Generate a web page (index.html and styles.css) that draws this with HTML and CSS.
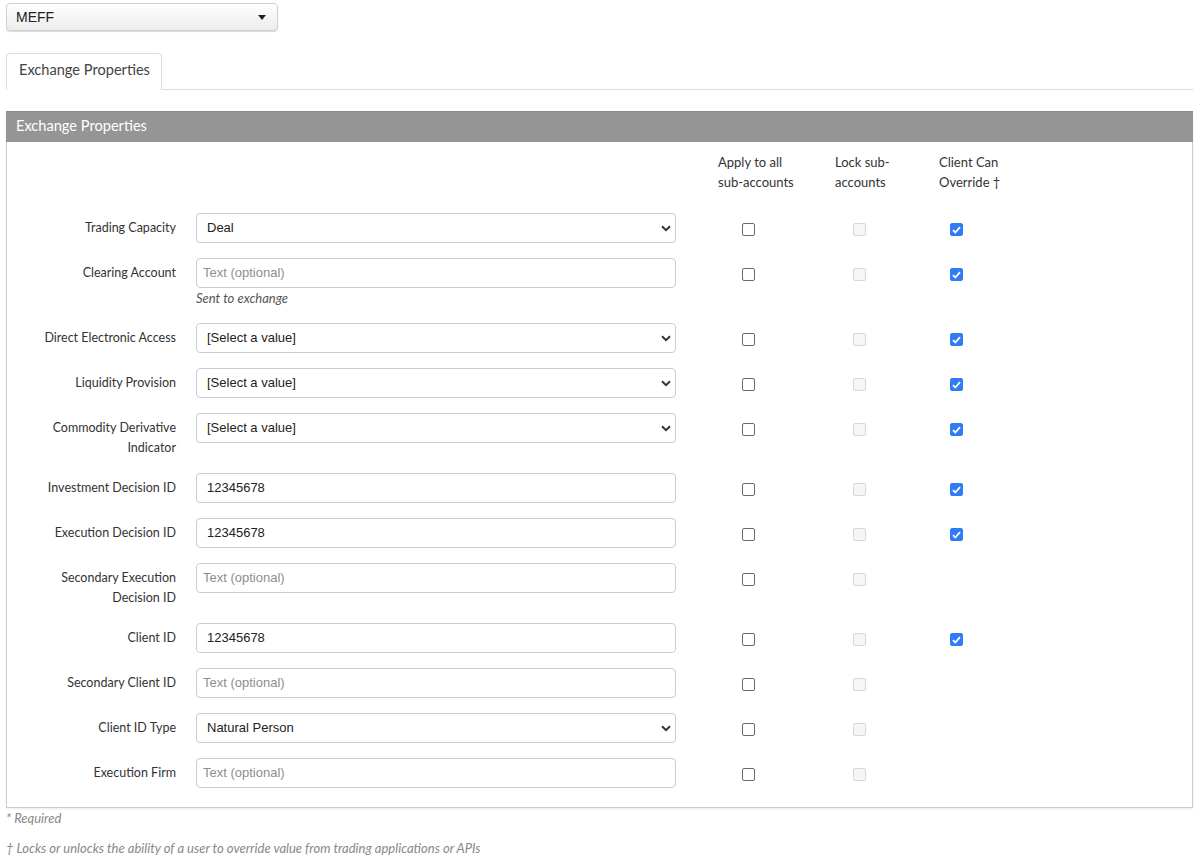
FILE: index.html
```html
<!DOCTYPE html>
<html lang="en">
  <head>
    <meta charset="UTF-8" />
    <title>Exchange Properties</title>
    <link rel="stylesheet" href="styles.css">
  </head>
  <body>
    <div class="exchange-select">
      <span>MEFF</span>
      <svg width="8" height="5" viewBox="0 0 8 5"><path d="M0 0h8L4 5z" fill="#222"/></svg>
    </div>

    <div class="tabs">
      <div class="tab">Exchange Properties</div>
    </div>

    <div class="panel">
      <div class="panel-heading">Exchange Properties</div>
      <div class="panel-body">
        <div class="form-row head-row">
          <div class="row-label"></div>
          <div class="row-field"></div>
          <div class="col col-apply">Apply to all<br>sub-accounts</div>
          <div class="col col-lock">Lock sub-<br>accounts</div>
          <div class="col col-override">Client Can<br>Override †</div>
        </div>

        <div class="form-row">
          <div class="row-label">Trading Capacity</div>
          <div class="row-field"><div class="select"><span>Deal</span><svg class="chev" width="10" height="7" viewBox="0 0 10 7"><path d="M1 1.2l4 4 4-4" fill="none" stroke="#333" stroke-width="2"/></svg></div></div>
          <div class="col col-apply"><span class="cb"></span></div>
          <div class="col col-lock"><span class="cb disabled"></span></div>
          <div class="col col-override"><span class="cb checked"><svg width="9" height="8" viewBox="0 0 9 8"><path d="M1 4.2l2.3 2.3L8 1.2" fill="none" stroke="#fff" stroke-width="1.8"/></svg></span></div>
        </div>

        <div class="form-row">
          <div class="row-label">Clearing Account</div>
          <div class="row-field">
            <div class="input placeholder">Text (optional)</div>
            <div class="help">Sent to exchange</div>
          </div>
          <div class="col col-apply"><span class="cb"></span></div>
          <div class="col col-lock"><span class="cb disabled"></span></div>
          <div class="col col-override"><span class="cb checked"><svg width="9" height="8" viewBox="0 0 9 8"><path d="M1 4.2l2.3 2.3L8 1.2" fill="none" stroke="#fff" stroke-width="1.8"/></svg></span></div>
        </div>

        <div class="form-row">
          <div class="row-label">Direct Electronic Access</div>
          <div class="row-field"><div class="select"><span>[Select a value]</span><svg class="chev" width="10" height="7" viewBox="0 0 10 7"><path d="M1 1.2l4 4 4-4" fill="none" stroke="#333" stroke-width="2"/></svg></div></div>
          <div class="col col-apply"><span class="cb"></span></div>
          <div class="col col-lock"><span class="cb disabled"></span></div>
          <div class="col col-override"><span class="cb checked"><svg width="9" height="8" viewBox="0 0 9 8"><path d="M1 4.2l2.3 2.3L8 1.2" fill="none" stroke="#fff" stroke-width="1.8"/></svg></span></div>
        </div>

        <div class="form-row">
          <div class="row-label">Liquidity Provision</div>
          <div class="row-field"><div class="select"><span>[Select a value]</span><svg class="chev" width="10" height="7" viewBox="0 0 10 7"><path d="M1 1.2l4 4 4-4" fill="none" stroke="#333" stroke-width="2"/></svg></div></div>
          <div class="col col-apply"><span class="cb"></span></div>
          <div class="col col-lock"><span class="cb disabled"></span></div>
          <div class="col col-override"><span class="cb checked"><svg width="9" height="8" viewBox="0 0 9 8"><path d="M1 4.2l2.3 2.3L8 1.2" fill="none" stroke="#fff" stroke-width="1.8"/></svg></span></div>
        </div>

        <div class="form-row">
          <div class="row-label">Commodity Derivative<br>Indicator</div>
          <div class="row-field"><div class="select"><span>[Select a value]</span><svg class="chev" width="10" height="7" viewBox="0 0 10 7"><path d="M1 1.2l4 4 4-4" fill="none" stroke="#333" stroke-width="2"/></svg></div></div>
          <div class="col col-apply"><span class="cb"></span></div>
          <div class="col col-lock"><span class="cb disabled"></span></div>
          <div class="col col-override"><span class="cb checked"><svg width="9" height="8" viewBox="0 0 9 8"><path d="M1 4.2l2.3 2.3L8 1.2" fill="none" stroke="#fff" stroke-width="1.8"/></svg></span></div>
        </div>

        <div class="form-row">
          <div class="row-label">Investment Decision ID</div>
          <div class="row-field"><div class="input">12345678</div></div>
          <div class="col col-apply"><span class="cb"></span></div>
          <div class="col col-lock"><span class="cb disabled"></span></div>
          <div class="col col-override"><span class="cb checked"><svg width="9" height="8" viewBox="0 0 9 8"><path d="M1 4.2l2.3 2.3L8 1.2" fill="none" stroke="#fff" stroke-width="1.8"/></svg></span></div>
        </div>

        <div class="form-row">
          <div class="row-label">Execution Decision ID</div>
          <div class="row-field"><div class="input">12345678</div></div>
          <div class="col col-apply"><span class="cb"></span></div>
          <div class="col col-lock"><span class="cb disabled"></span></div>
          <div class="col col-override"><span class="cb checked"><svg width="9" height="8" viewBox="0 0 9 8"><path d="M1 4.2l2.3 2.3L8 1.2" fill="none" stroke="#fff" stroke-width="1.8"/></svg></span></div>
        </div>

        <div class="form-row">
          <div class="row-label">Secondary Execution<br>Decision ID</div>
          <div class="row-field"><div class="input placeholder">Text (optional)</div></div>
          <div class="col col-apply"><span class="cb"></span></div>
          <div class="col col-lock"><span class="cb disabled"></span></div>
          <div class="col col-override"></div>
        </div>

        <div class="form-row">
          <div class="row-label">Client ID</div>
          <div class="row-field"><div class="input">12345678</div></div>
          <div class="col col-apply"><span class="cb"></span></div>
          <div class="col col-lock"><span class="cb disabled"></span></div>
          <div class="col col-override"><span class="cb checked"><svg width="9" height="8" viewBox="0 0 9 8"><path d="M1 4.2l2.3 2.3L8 1.2" fill="none" stroke="#fff" stroke-width="1.8"/></svg></span></div>
        </div>

        <div class="form-row">
          <div class="row-label">Secondary Client ID</div>
          <div class="row-field"><div class="input placeholder">Text (optional)</div></div>
          <div class="col col-apply"><span class="cb"></span></div>
          <div class="col col-lock"><span class="cb disabled"></span></div>
          <div class="col col-override"></div>
        </div>

        <div class="form-row">
          <div class="row-label">Client ID Type</div>
          <div class="row-field"><div class="select"><span>Natural Person</span><svg class="chev" width="10" height="7" viewBox="0 0 10 7"><path d="M1 1.2l4 4 4-4" fill="none" stroke="#333" stroke-width="2"/></svg></div></div>
          <div class="col col-apply"><span class="cb"></span></div>
          <div class="col col-lock"><span class="cb disabled"></span></div>
          <div class="col col-override"></div>
        </div>

        <div class="form-row">
          <div class="row-label">Execution Firm</div>
          <div class="row-field"><div class="input placeholder">Text (optional)</div></div>
          <div class="col col-apply"><span class="cb"></span></div>
          <div class="col col-lock"><span class="cb disabled"></span></div>
          <div class="col col-override"></div>
        </div>
      </div>
    </div>

    <p class="note">* Required</p>
    <p class="note">† Locks or unlocks the ability of a user to override value from trading applications or APIs</p>
  </body>
</html>
```

FILE: styles.css
```css
body {
  font-family: Lato, "Open Sans", sans-serif;
  font-size: 12.5px;
  color: #333;
  margin: 0;
  padding: 3px 3px 0 6px;
  background: #fff;
}

.exchange-select {
  width: 272px;
  height: 28px;
  box-sizing: border-box;
  display: flex;
  align-items: center;
  justify-content: space-between;
  padding: 0 11px 0 9px;
  border: 1px solid #d0d0d0;
  border-radius: 4px;
  background: linear-gradient(#fff, #ececec);
  box-shadow: 0 1px 1px rgba(0, 0, 0, 0.15);
  font-family: "Liberation Sans", Arial, sans-serif;
  font-size: 14px;
  color: #222;
}

.tabs {
  margin-top: 22px;
  border-bottom: 1px solid #ddd;
  display: flex;
}

.tab {
  width: 156px;
  box-sizing: border-box;
  height: 37px;
  padding: 7px 0 0 12px;
  border: 1px solid #ddd;
  border-bottom: none;
  border-radius: 4px 4px 0 0;
  margin-bottom: -1px;
  background: #fff;
  font-size: 14.6px;
  color: #444;
}

.panel {
  margin-top: 21px;
  border: 1px solid #ccc;
  border-top: none;
  box-shadow: 0 1px 2px rgba(0, 0, 0, 0.08);
}

.panel-heading {
  background: #959595;
  color: #fff;
  font-size: 14.6px;
  height: 31px;
  line-height: 28px;
  padding-left: 10px;
  margin: 0 -1px;
  border-top: 1px solid #8a8a8a;
  box-sizing: border-box;
}

.panel-body {
  padding: 10px 0 4px;
}

.form-row {
  display: flex;
  align-items: flex-start;
  margin-bottom: 15px;
  line-height: 20px;
}

.head-row {
  margin-bottom: 21px;
  font-size: 13px;
}

.row-label {
  width: 169px;
  padding-top: 5px;
  text-align: right;
  margin-right: 20px;
  flex-shrink: 0;
}

.head-row .row-label {
  padding-top: 0;
}

.row-field {
  width: 480px;
  flex-shrink: 0;
  margin-right: 42px;
}

.input,
.select {
  height: 30px;
  box-sizing: border-box;
  border: 1px solid #ccc;
  border-radius: 4px;
  padding: 0 10px;
  display: flex;
  align-items: center;
  font-family: "Liberation Sans", Arial, sans-serif;
  font-size: 13px;
  color: #222;
}

.select {
  justify-content: space-between;
  padding-right: 4px;
}

.placeholder {
  color: #8e8e8e;
  padding-left: 6px;
}

.help {
  font-style: italic;
  color: #555;
  font-size: 13px;
}

.col {
  flex-shrink: 0;
  display: flex;
  flex-direction: column;
}

.form-row .col:not(:empty) {
  padding-top: 10px;
}

.head-row .col:not(:empty) {
  padding-top: 0;
}

.col-apply {
  width: 117px;
}

.col-lock {
  width: 104px;
}

.col-override {
  width: 100px;
}

.form-row .col-apply .cb {
  margin-left: 24px;
}

.form-row .col-lock .cb {
  margin-left: 18px;
}

.form-row .col-override .cb {
  margin-left: 11px;
}

.cb {
  width: 13px;
  height: 13px;
  box-sizing: border-box;
  border: 1px solid #6b6b6b;
  border-radius: 2px;
  background: #fff;
  display: flex;
  align-items: center;
  justify-content: center;
}

.cb.disabled {
  border-color: #d8d8d8;
  background: #f6f6f6;
}

.cb.checked {
  border-color: #2f7cf6;
  background: #2f7cf6;
}

.note {
  margin: 0 0 10px;
  line-height: 20px;
  font-size: 13px;
  font-style: italic;
  color: #888;
}
```
